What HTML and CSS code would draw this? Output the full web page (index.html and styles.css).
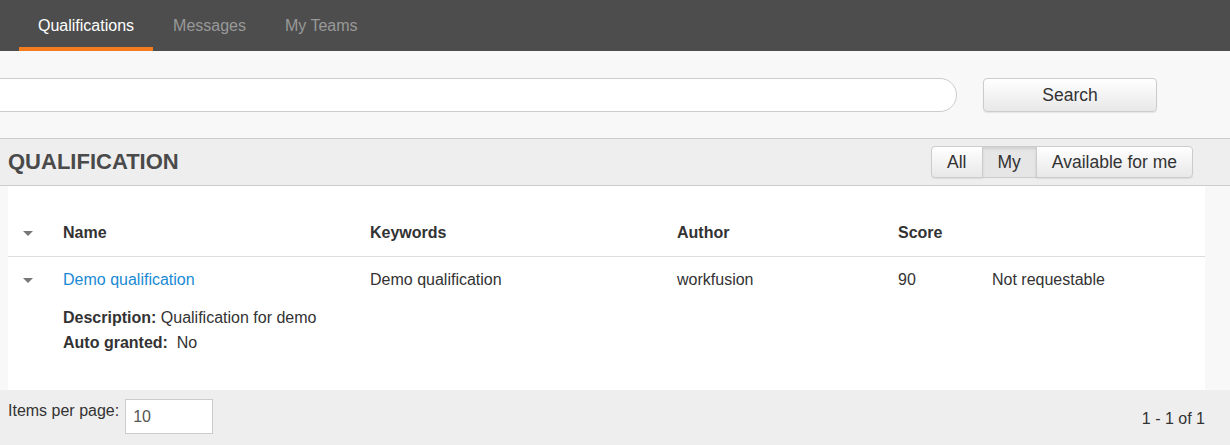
FILE: index.html
```html
<!DOCTYPE html>
<html lang="en">
<head>
    <meta charset="UTF-8">
    <meta name="viewport" content="width=device-width, initial-scale=1.0">
    <title>Qualifications</title>
    <link rel="stylesheet" href="styles.css">
</head>
<body>
    <div class="topbar">
        <a class="tab active" href="#">Qualifications</a>
        <a class="tab" href="#">Messages</a>
        <a class="tab" href="#">My Teams</a>
    </div>

    <div class="search-row">
        <input class="search-input" type="text">
        <button class="btn search-btn">Search</button>
    </div>

    <div class="section-head">
        <h1>QUALIFICATION</h1>
        <div class="btn-group">
            <button class="btn">All</button>
            <button class="btn active">My</button>
            <button class="btn">Available for me</button>
        </div>
    </div>

    <div class="list">
        <div class="list-row list-header">
            <span class="toggle"></span>
            <span>Name</span>
            <span>Keywords</span>
            <span>Author</span>
            <span>Score</span>
            <span></span>
        </div>
        <div class="list-row">
            <span class="toggle"></span>
            <a class="name-link" href="#">Demo qualification</a>
            <span>Demo qualification</span>
            <span>workfusion</span>
            <span>90</span>
            <span>Not requestable</span>
        </div>
        <div class="details">
            <p><b>Description:</b> Qualification for demo</p>
            <p><b>Auto granted:</b>&nbsp; No</p>
        </div>
    </div>

    <div class="pager">
        <div class="per-page">
            <label>Items per page:</label>
            <input class="per-page-input" type="text" value="10">
        </div>
        <div class="range">1 - 1 of 1</div>
    </div>
</body>
</html>
```

FILE: styles.css
```css
body {
    margin: 0;
    font-family: "Liberation Sans", Arial, sans-serif;
    font-size: 16px;
    color: #333;
    background: #f8f8f8;
}
.topbar {
    display: flex;
    height: 51px;
    padding-left: 19px;
    background: #4d4d4d;
}
.tab {
    display: block;
    padding: 0 19px;
    margin-right: 1px;
    line-height: 51px;
    color: #999;
    text-decoration: none;
}
.tab.active {
    color: #fff;
    box-shadow: inset 0 -4px 0 #f47b20;
}
.search-row {
    display: flex;
    gap: 26px;
    margin-left: -40px;
    padding: 27px 73px 26px 0;
    border-bottom: 1px solid #ccc;
}
.search-input {
    flex: 1;
    height: 34px;
    box-sizing: border-box;
    border: 1px solid #ccc;
    border-radius: 17px;
    background: #fff;
}
.btn {
    font-family: inherit;
    font-size: 17.5px;
    color: #333;
    border: 1px solid #ccc;
    border-radius: 4px;
    background: linear-gradient(#fff, #e8e8e8);
    box-shadow: 0 1px 1px rgba(0, 0, 0, 0.08);
    cursor: pointer;
}
.search-btn {
    width: 174px;
    height: 34px;
}
.section-head {
    display: flex;
    align-items: center;
    justify-content: space-between;
    height: 46px;
    padding: 0 37px 0 8px;
    background: #eee;
    border-bottom: 1px solid #ccc;
}
.section-head h1 {
    margin: 0;
    font-size: 22px;
    color: #4a4a4a;
}
.btn-group {
    display: flex;
}
.btn-group .btn {
    height: 32px;
    padding: 0 15px;
    border-radius: 0;
    margin-left: -1px;
}
.btn-group .btn:first-child {
    border-radius: 4px 0 0 4px;
    margin-left: 0;
}
.btn-group .btn:last-child {
    border-radius: 0 4px 4px 0;
}
.btn-group .btn.active {
    background: #e6e6e6;
    box-shadow: inset 0 2px 3px rgba(0, 0, 0, 0.1);
}
.list {
    margin: 0 25px 0 8px;
    padding: 24px 0 35px;
    background: #fff;
}
.list-row {
    display: grid;
    grid-template-columns: 55px 307px 307px 221px 94px 1fr;
    align-items: center;
    padding: 14px 0;
    line-height: 18px;
}
.list-header {
    font-weight: bold;
    border-bottom: 1px solid #ddd;
}
.toggle {
    justify-self: start;
    margin-left: 15px;
    width: 0;
    height: 0;
    border-left: 5px solid transparent;
    border-right: 5px solid transparent;
    border-top: 5px solid #777;
}
.name-link {
    color: #1a8ad4;
    text-decoration: none;
}
.details {
    padding-left: 55px;
    margin-top: 2px;
}
.details p {
    margin: 0;
    line-height: 25px;
}
.pager {
    display: flex;
    justify-content: space-between;
    padding: 9px 25px 0 8px;
    background: #eee;
    height: 60px;
}
.per-page {
    display: flex;
    align-items: flex-start;
    gap: 6px;
}
.per-page label {
    line-height: 24px;
}
.per-page-input {
    width: 88px;
    height: 35px;
    box-sizing: border-box;
    padding: 0 7px;
    border: 1px solid #ccc;
    font-family: inherit;
    font-size: 16px;
    color: #555;
    background: #fff;
}
.range {
    margin-top: 11px;
}
```
